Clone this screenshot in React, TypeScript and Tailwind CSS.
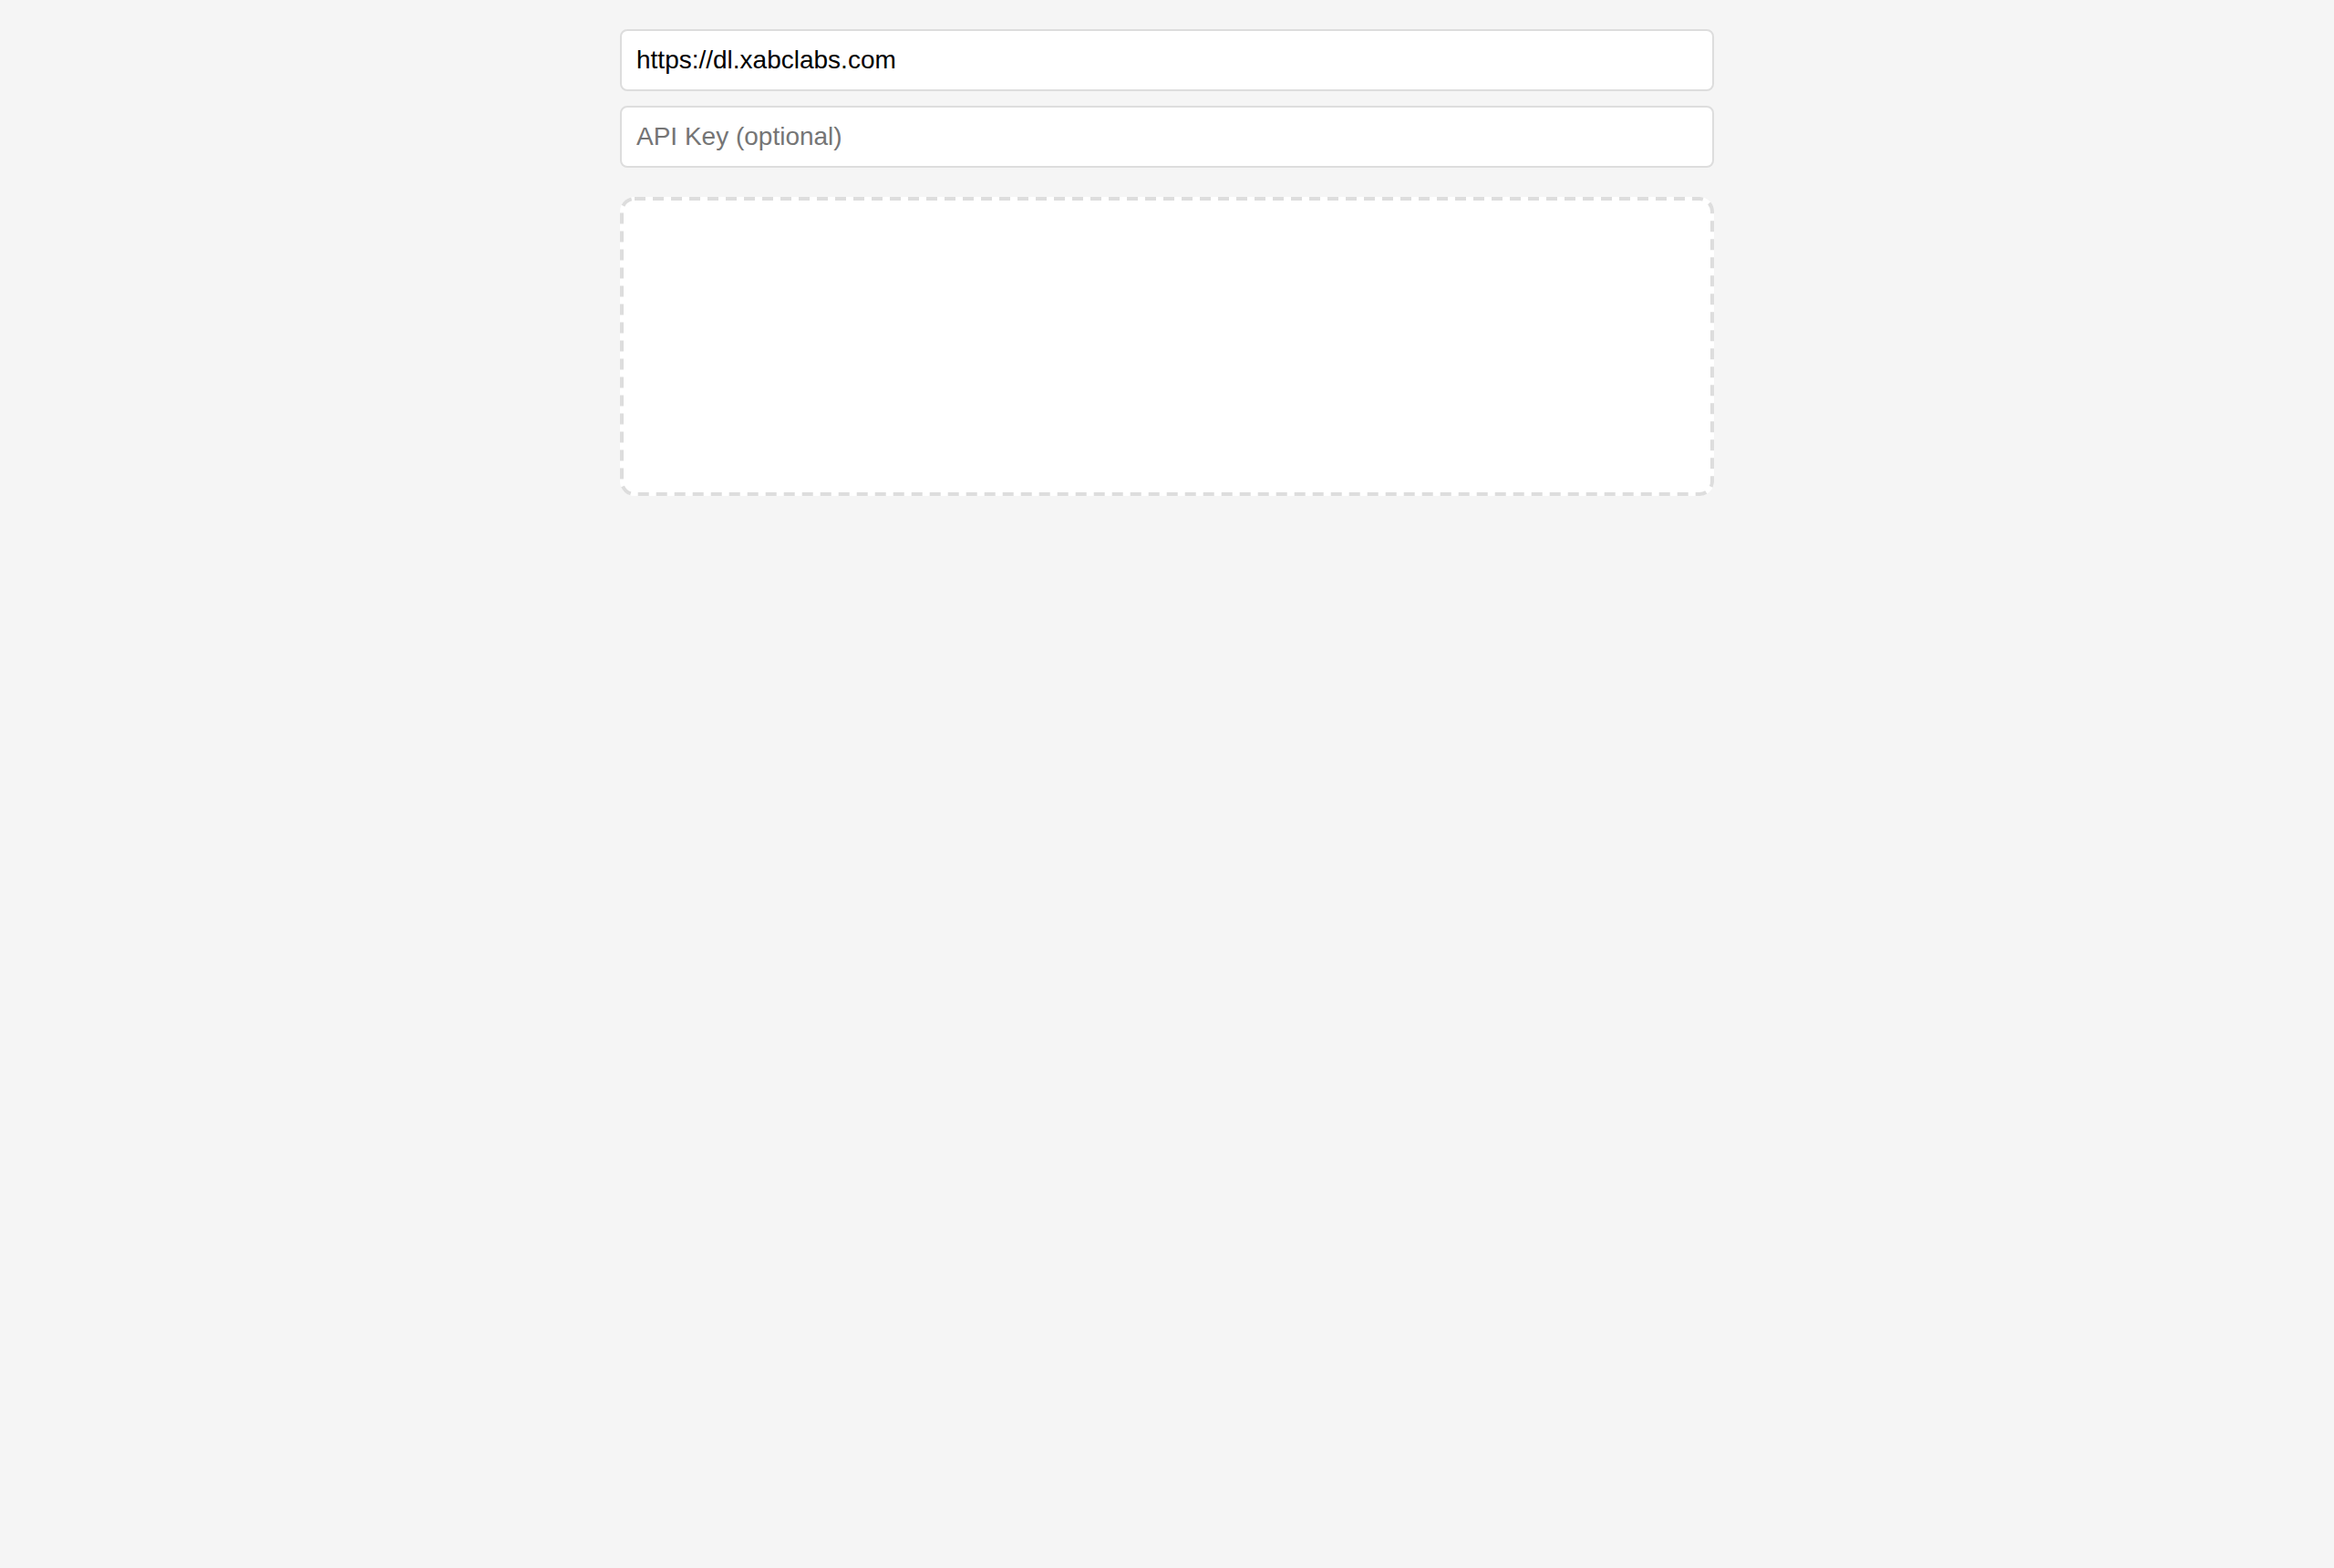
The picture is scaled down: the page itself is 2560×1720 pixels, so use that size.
import React from "react";

export default function App() {
  return (
    <div className="min-h-[1720px] w-full bg-[#f5f5f5] font-['Liberation_Sans',Arial,sans-serif]">
      <div className="mx-auto flex w-[1200px] flex-col pt-8">
        <input
          type="text"
          defaultValue="https://dl.xabclabs.com"
          className="h-[68px] w-full rounded-lg border-2 border-[#dddddd] bg-white px-4 text-[28px] text-black outline-none"
        />
        <input
          type="text"
          placeholder="API Key (optional)"
          className="mt-4 h-[68px] w-full rounded-lg border-2 border-[#dddddd] bg-white px-4 text-[28px] text-black outline-none placeholder:text-[#757575]"
        />
        <div className="relative mt-8 h-[328px] w-full rounded-2xl bg-white">
          <svg
            className="pointer-events-none absolute inset-0"
            width="1200"
            height="328"
            viewBox="0 0 1200 328"
          >
            <rect
              x="2"
              y="2"
              width="1196"
              height="324"
              rx="14"
              ry="14"
              fill="none"
              stroke="#dddddd"
              strokeWidth="4"
              strokeDasharray="12 8"
            />
          </svg>
        </div>
      </div>
    </div>
  );
}
